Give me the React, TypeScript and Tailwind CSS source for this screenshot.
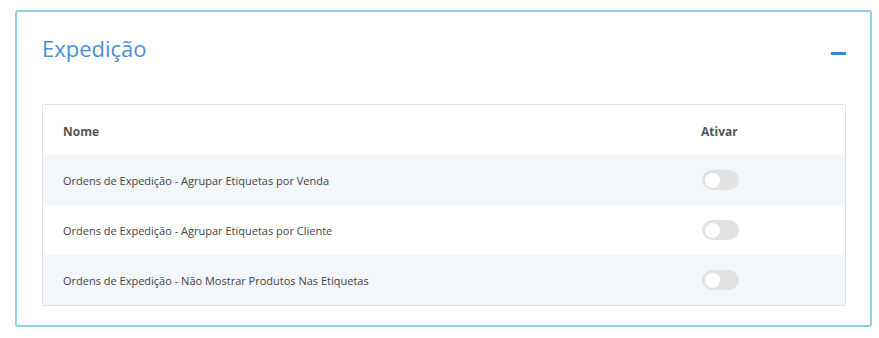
import React from "react";

const rows = [
  { label: "Ordens de Expedição - Agrupar Etiquetas por Venda", striped: true },
  { label: "Ordens de Expedição - Agrupar Etiquetas por Cliente", striped: false },
  { label: "Ordens de Expedição - Não Mostrar Produtos Nas Etiquetas", striped: true },
];

function Toggle() {
  return (
    <div className="w-[37px] h-[20px] rounded-full bg-[#e2e2e2] flex items-center px-[3px]">
      <div className="w-[15px] h-[15px] rounded-full bg-white" />
    </div>
  );
}

export default function App() {
  return (
    <div className="w-[879px] h-[338px] bg-white pt-[10px] pl-[15px] font-['Open_Sans',sans-serif]">
      <div className="w-[857px] h-[317px] border-2 border-[#8dd0e7] rounded-[3px] pt-[21px] pl-[25px] pr-[24px]">
        <div className="flex justify-between items-start h-[30px]">
          <h2 className="text-[22px] leading-[30px] text-[#4a8ed8] font-normal">Expedição</h2>
          <div className="w-[15px] h-[3px] bg-[#3a86d3] mt-[19px] mr-[0px]" />
        </div>
        <div className="mt-[41px] border border-[#dde1e6] rounded-[2px] overflow-hidden">
          <div className="flex h-[50px] items-center text-[12px] font-bold text-[#555] pt-[3px]">
            <div className="w-[638px] pl-[20px]">Nome</div>
            <div className="pl-[20px]">Ativar</div>
          </div>
          {rows.map((r) => (
            <div
              key={r.label}
              className={`flex h-[50px] items-center text-[11px] text-[#444] ${r.striped ? "bg-[#f3f6fb]" : "bg-white"}`}
            >
              <div className="w-[638px] pl-[20px] pt-[3px]">{r.label}</div>
              <div className="pl-[21px]">
                <Toggle />
              </div>
            </div>
          ))}
        </div>
      </div>
    </div>
  );
}
